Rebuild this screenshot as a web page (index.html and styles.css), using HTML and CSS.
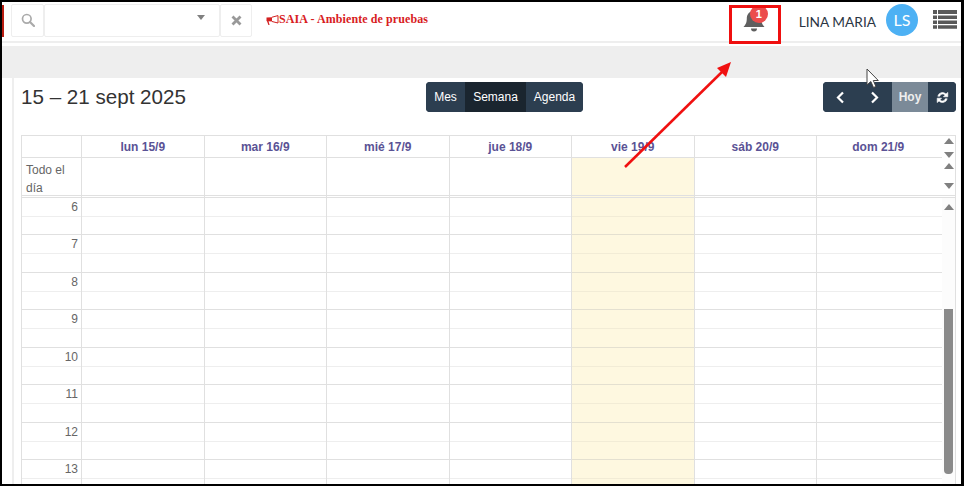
FILE: index.html
```html
<!DOCTYPE html>
<html lang="es">
<head>
<meta charset="utf-8">
<title>Calendario</title>
<link rel="stylesheet" href="styles.css">
</head>
<body>
<div class="frame">
  <header class="topbar">
    <div class="redtab"></div>
    <div class="search">
      <div class="addon addon-search">
        <svg width="14" height="14" viewBox="0 0 14 14"><circle cx="5.8" cy="5.8" r="4.3" fill="none" stroke="#aaa" stroke-width="1.7"/><path d="M9 9l4 4" stroke="#aaa" stroke-width="2.2" stroke-linecap="round"/></svg>
      </div>
      <div class="select"><span class="caret"></span></div>
      <div class="addon addon-clear">
        <svg width="11" height="11" viewBox="0 0 11 11"><path d="M1.5 1.5l8 8M9.5 1.5l-8 8" stroke="#999" stroke-width="2.8"/></svg>
      </div>
    </div>
    <div class="notice">
      <svg class="megaphone" width="13" height="11" viewBox="0 0 13 11"><path d="M0.5 2.5L6 2.2V6.5L2.5 6.2 3.6 10H2.4L1 6.2 0.5 6Z" fill="#d32020"/><path d="M6 2.2L12 0.6V8L6 6.5" fill="none" stroke="#d32020"/></svg><span>SAIA - Ambiente de pruebas</span>
    </div>
    <div class="bell">
      <svg width="24" height="26" viewBox="0 0 24 26"><path d="M12 1.5c1.200 0 2 .8 2 1.800 3.500.8 5.200 3.800 5.200 7.200 0 4.500 1.500 6.500 3.300 8.500H1.500c1.800-2 3.300-4 3.300-8.500 0-3.400 1.700-6.400 5.200-7.200 0-1 .8-1.800 2-1.800Z" fill="#5f5f5f"/><path d="M9 20.500h6a3 3 0 0 1-6 0Z" fill="#5f5f5f"/></svg>
      <span class="badge">1</span>
    </div>
    <div class="username">LINA MARIA</div>
    <div class="avatar">LS</div>
    <svg class="listicon" width="24" height="20" viewBox="0 0 24 20"><path d="M0 1h4v4H0zM0 6.500h4v3.500H0zM0 11.500h4v3.500H0zM0 16.200h4v3.500H0zM5 1h19v4H5zM5 6.500h19v3.500H5zM5 11.500h19v3.500H5zM5 16.200h19v3.500H5z" fill="#595959"/></svg>
  </header>
  <div class="strip"></div>
  <main class="content">
    <div class="toolbar">
      <h2 class="range">15 – 21 sept 2025</h2>
      <div class="btn-group views">
        <button class="btn">Mes</button>
        <button class="btn active">Semana</button>
        <button class="btn">Agenda</button>
      </div>
      <div class="btn-group nav">
        <button class="btn arrow"><svg width="9" height="13" viewBox="0 0 9 13"><path d="M7 1.500L2 6.500l5 5" fill="none" stroke="#fff" stroke-width="2.200"/></svg></button>
        <button class="btn arrow"><svg width="9" height="13" viewBox="0 0 9 13"><path d="M2 1.500l5 5-5 5" fill="none" stroke="#fff" stroke-width="2.200"/></svg></button>
        <button class="btn today">Hoy</button>
        <button class="btn refresh"><svg width="13" height="13" viewBox="0 0 13 13"><path d="M1.800 5.200A4.800 4.800 0 0 1 10 3l1.800-1.600v4.400H7.400L9 4.200A3 3 0 0 0 3.700 5.200ZM11.200 7.800A4.800 4.800 0 0 1 3 10l-1.800 1.600V7.200h4.400L4 8.800a3 3 0 0 0 5.300-1Z" fill="#fff" stroke="#fff" stroke-width=".6"/></svg></button>
      </div>
    </div>
    <div class="calendar">
      <div class="headrow">
        <div class="cell axis"></div>
        <div class="cell day">lun 15/9</div>
        <div class="cell day">mar 16/9</div>
        <div class="cell day">mié 17/9</div>
        <div class="cell day">jue 18/9</div>
        <div class="cell day">vie 19/9</div>
        <div class="cell day">sáb 20/9</div>
        <div class="cell day">dom 21/9</div>
        <div class="scrollcol"><span class="up"></span><span class="down"></span></div>
      </div>
      <div class="allday">
        <div class="cell axis allday-label">Todo el día</div>
        <div class="cell"></div><div class="cell"></div><div class="cell"></div><div class="cell"></div>
        <div class="cell today-col"></div>
        <div class="cell"></div><div class="cell"></div>
        <div class="scrollcol tall"><span class="up"></span><span class="down"></span></div>
      </div>
      <div class="timed">
        <div class="hours">
          <div class="hour"><span>6</span></div>
          <div class="hour"><span>7</span></div>
          <div class="hour"><span>8</span></div>
          <div class="hour"><span>9</span></div>
          <div class="hour"><span>10</span></div>
          <div class="hour"><span>11</span></div>
          <div class="hour"><span>12</span></div>
          <div class="hour"><span>13</span></div>
        </div>
        <div class="columns">
          <div class="col"></div><div class="col"></div><div class="col"></div><div class="col"></div>
          <div class="col today-col"></div>
          <div class="col"></div><div class="col"></div>
        </div>
        <div class="scrollbar"><span class="up"></span><div class="thumb"></div></div>
      </div>
    </div>
  </main>
  <div class="callout"></div>
  <svg class="arrow-overlay" width="964" height="486" viewBox="0 0 964 486">
    <path d="M625 167L724 70" stroke="#f01010" stroke-width="2.500" fill="none"/>
    <path d="M731 62L717 68 726 77Z" fill="#f01010"/>
    <path d="M867 69v16l3.800-3.500 2.700 6 2.400-1-2.600-6h5Z" fill="#fff" stroke="#444" stroke-width="1"/>
  </svg>
</div>
</body>
</html>
```
FILE: styles.css
```css
* { box-sizing: border-box; }
html, body { margin: 0; padding: 0; background: #fff; }
.frame {
  position: relative;
  width: 964px;
  height: 486px;
  overflow: hidden;
  border: 2px solid #000;
  border-right-width: 3px;
  font-family: "Liberation Sans", Arial, sans-serif;
  background: #fff;
}

/* top bar */
.topbar {
  position: relative;
  display: flex;
  align-items: center;
  height: 41px;
  padding-right: 4px;
  border-bottom: 2px solid #eee;
  background: #fff;
}
.redtab { width: 2px; height: 32px; margin-top: -2px; background: #b91c10; }
.search { display: flex; height: 33px; margin: -3px 0 0 7px; }
.addon, .select {
  display: flex;
  align-items: center;
  justify-content: center;
  height: 100%;
  border: 1px solid #eee;
  border-radius: 2px;
}
.addon-search { width: 33px; }
.select { position: relative; width: 176px; }
.addon-clear { width: 32px; }
.caret {
  position: absolute;
  right: 14px;
  top: 10px;
  border: 5px solid transparent;
  border-top: 5px solid #808080;
  border-bottom: 0;
  border-left-width: 4px;
  border-right-width: 4px;
}
.notice {
  display: flex;
  align-items: center;
  margin: -4px 0 0 14px;
  font-family: "Liberation Serif", "Times New Roman", serif;
  font-size: 12px;
  font-weight: bold;
  letter-spacing: .09px;
  color: #d8201e;
}
.megaphone { margin-top: 1px; }
.bell { position: relative; margin: -1px 0 0 auto; width: 24px; height: 26px; }
.badge {
  position: absolute;
  left: 8px;
  top: -3px;
  width: 18px;
  height: 18px;
  border-radius: 50%;
  background: #ec4c4c;
  color: #fff;
  font-size: 11px;
  font-weight: bold;
  line-height: 18px;
  text-align: center;
}
.username {
  margin: -1px 0 0 33px;
  font-family: Lato, "Liberation Sans", sans-serif;
  font-size: 13.700px;
  color: #2b3544;
  white-space: nowrap;
}
.avatar {
  width: 32px;
  height: 32px;
  margin: -4px 0 0 10px;
  border-radius: 50%;
  background: #4db1f4;
  color: #fff;
  font-family: Lato, "Liberation Sans", sans-serif;
  font-size: 16px;
  line-height: 32px;
  text-align: center;
}
.listicon { margin: -5px 0 0 15px; }

/* grey strip */
.strip { height: 32px; margin-top: 3px; background: #eee; }

/* content */
.content { height: 408px; margin-left: 10px; padding-left: 7px; border-left: 2px solid #eee; overflow: hidden; }
.toolbar { position: relative; display: flex; align-items: flex-start; height: 55px; padding-top: 4px; }
.range { margin: 2px 0 0 0; width: 405px; font-size: 20.600px; font-weight: normal; line-height: 26px; color: #333; white-space: nowrap; }
.btn-group { display: flex; height: 30px; border-radius: 4px; overflow: hidden; background: #2c3e50; }
.nav { margin-left: 240px; }
.btn {
  height: 100%;
  padding: 0;
  border: 0;
  background: #2c3e50;
  color: #fff;
  font-family: "Liberation Sans", Arial, sans-serif;
  font-size: 12px;
  display: flex;
  align-items: center;
  justify-content: center;
}
.views .btn:nth-child(1) { width: 39px; }
.views .btn:nth-child(2) { width: 61px; }
.views .btn:nth-child(3) { width: 57px; }
.btn.active { background: #1a252f; }
.btn.arrow { width: 34.500px; }
.btn.today { width: 36px; background: #7b8a98; color: #eee; font-weight: bold; }
.btn.refresh { width: 28px; }

/* calendar */
.calendar { width: 935px; margin-top: 2px; border-top: 1px solid #e0e0e0; border-left: 1px solid #e0e0e0; border-right: 1px solid #e0e0e0; }
.headrow, .allday { display: grid; grid-template-columns: 60px repeat(6, 122.500px) 124.500px 1fr; }
.headrow { height: 21px; }
.allday { height: 38px; }
.cell { border-right: 1px solid #e0e0e0; }
.allday .cell { border-top: 1px solid #e0e0e0; }
.cell:nth-last-child(2) { border-right: 0; }
.day {
  color: #5a5295;
  font-size: 12px;
  font-weight: bold;
  line-height: 22px;
  text-align: center;
}
.cell.day:nth-last-child(2) { padding-right: 2px; }
.allday-label { padding: 3px 4px 0; font-size: 12px; line-height: 18px; color: #666; }
.today-col { background: #fef8e0; }
.scrollcol { position: relative; }
.up, .down { position: absolute; left: 2px; width: 0; height: 0; border-left: 5px solid transparent; border-right: 5px solid transparent; }
.up { border-bottom: 6px solid #808080; }
.down { border-top: 6px solid #808080; }
.scrollcol .up { top: 2px; }
.scrollcol .down { top: 16px; }
.scrollcol.tall .up { top: 6px; }
.scrollcol.tall .down { top: 26px; }

.timed {
  position: relative;
  display: grid;
  grid-template-columns: 60px 859.500px 1fr;
  height: 292px;
  border-top: 3px double #e0e0e0;
  overflow: hidden;
}
.hours { border-right: 1px solid #e0e0e0; }
.hour {
  height: 37.450px;
  border-bottom: 1px solid #e0e0e0;
  background: linear-gradient(#fff 18px, #eee 18px, #eee 19px, #fff 19px);
  padding-right: 3px;
  text-align: right;
  font-size: 12px;
  line-height: 18px;
  color: #666;
}
.columns {
  display: grid;
  grid-template-columns: repeat(6, 122.500px) 124.500px;
  background: repeating-linear-gradient(#fff 0, #fff 18px, #eee 18px, #eee 19px, #fff 19px, #fff 36.450px, #e0e0e0 36.450px, #e0e0e0 37.450px);
}
.col { border-right: 1px solid #e0e0e0; }
.col:last-child { border-right: 0; }
.col.today-col { background: repeating-linear-gradient(#fef8e0 0, #fef8e0 18px, #f2ecd6 18px, #f2ecd6 19px, #fef8e0 19px, #fef8e0 36.450px, #e4e0d0 36.450px, #e4e0d0 37.450px); }
.scrollbar { position: relative; background: #fcfcfc; }
.scrollbar .up { top: 6px; }
.thumb { position: absolute; left: 2px; top: 111px; width: 9px; height: 165px; border-radius: 0 0 4px 4px; background: #8a8a8a; }

/* annotations */
.callout { position: absolute; left: 727px; top: 3px; width: 52px; height: 39px; border: 3px solid #ef0f0f; }
.arrow-overlay { position: absolute; left: -2px; top: -2px; pointer-events: none; }
```
